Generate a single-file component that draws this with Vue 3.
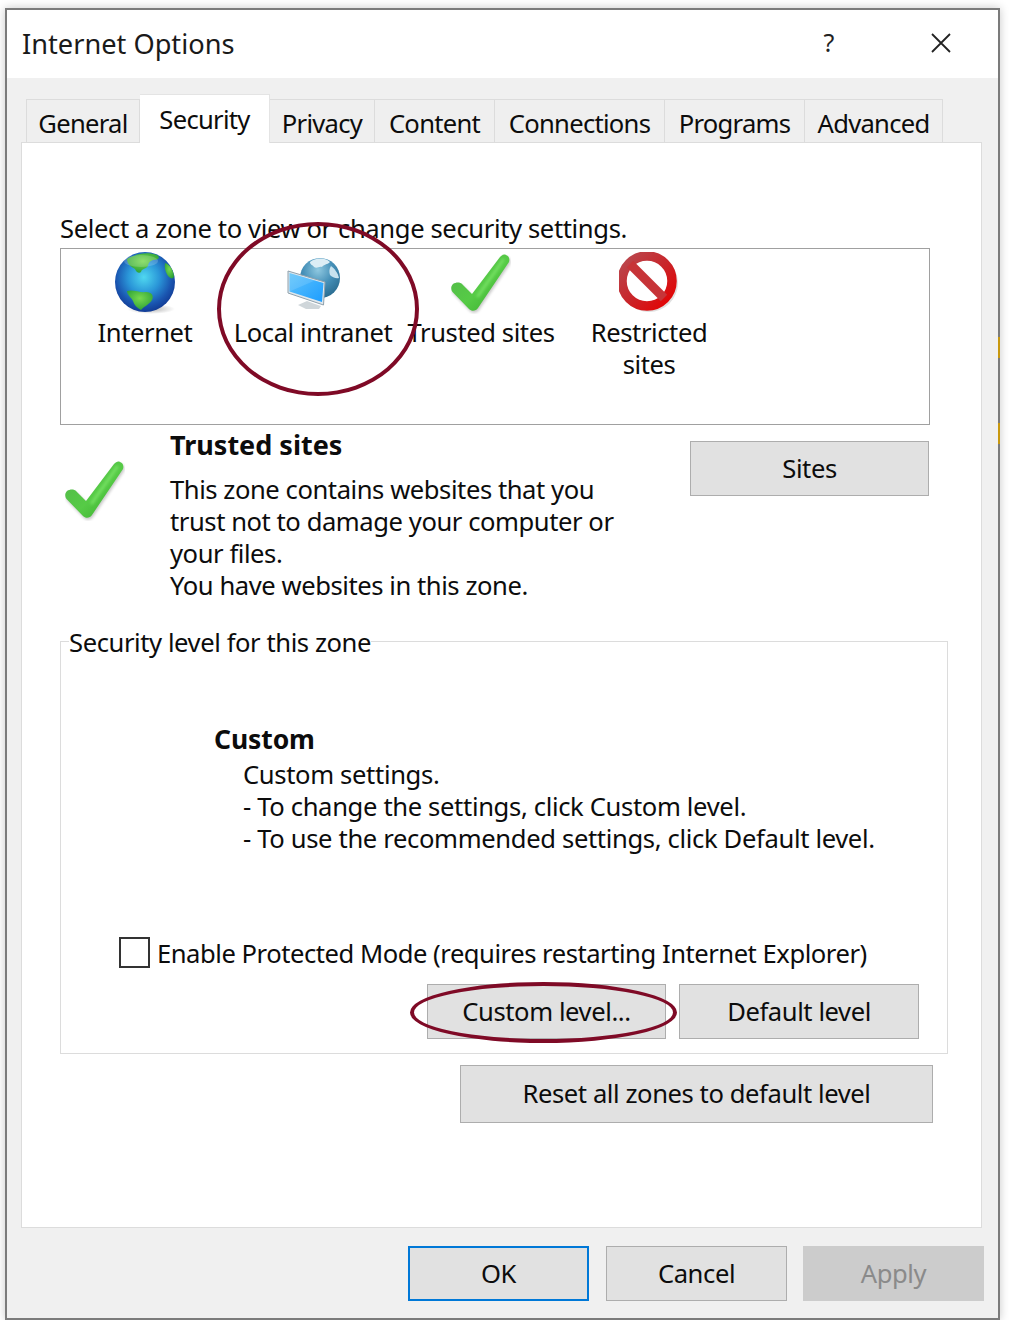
<script setup>
const tabs = [
  { name: 'General', width: 114 },
  { name: 'Security', width: 130, active: true },
  { name: 'Privacy', width: 105 },
  { name: 'Content', width: 120 },
  { name: 'Connections', width: 170 },
  { name: 'Programs', width: 140 },
  { name: 'Advanced', width: 138 },
]
const checkPath = 'M55 3C58 4 59 7 58 10L27 56C25 59 21 60 18 57L1.500 40C-.5 37 0 34 2 32C5 30 9 30 11 32L21 42L49 5C51 3 53 2 55 3Z'
</script>

<template>
  <div class="window">
    <header class="titlebar">
      <span class="title">Internet Options</span>
      <span class="help">?</span>
      <svg class="close" viewBox="0 0 20 20" width="20" height="20"><path d="M1 1L19 19M19 1L1 19" stroke="#222" stroke-width="1.8" fill="none" /></svg>
    </header>

    <div class="body">
      <nav class="tabs">
        <div
          v-for="tab in tabs"
          :key="tab.name"
          class="tab"
          :class="{ active: tab.active }"
          :style="{ width: tab.width + 'px' }"
        >{{ tab.name }}</div>
      </nav>

      <main class="panel">
        <p class="prompt">Select a zone to view or change security settings.</p>

        <div class="zones">
          <div class="zone">
            <svg class="zone-icon" viewBox="0 0 60 62" width="60" height="62">
              <defs>
                <radialGradient id="sea" cx="48%" cy="42%" r="58%">
                  <stop offset="0" stop-color="#4fd8f0" />
                  <stop offset=".45" stop-color="#2a96d8" />
                  <stop offset=".8" stop-color="#1a55b0" />
                  <stop offset="1" stop-color="#123c96" />
                </radialGradient>
                <radialGradient id="land" cx="50%" cy="40%" r="70%">
                  <stop offset="0" stop-color="#78d94e" />
                  <stop offset="1" stop-color="#239a33" />
                </radialGradient>
                <radialGradient id="floor" cx="50%" cy="50%" r="50%">
                  <stop offset="0" stop-color="#000" stop-opacity=".3" />
                  <stop offset="1" stop-color="#000" stop-opacity="0" />
                </radialGradient>
              </defs>
              <ellipse cx="36" cy="57" rx="24" ry="5" fill="url(#floor)" />
              <circle cx="30" cy="30" r="30" fill="url(#sea)" />
              <path d="M12 7C18 3 31-1 42 3C46 6 43 8 38 8C35 9 33 11 33 14C30 18 27 16 26 20C24 22 21 20 20 17C17 15 12 13 12 7Z" fill="url(#land)" />
              <path d="M50 11C54 12 58 17 59 24C59 27 56 27 54 25C51 22 49 16 50 11Z" fill="url(#land)" />
              <path d="M12 39C18 37 25 41 31 40C37 40 39 44 37 48C34 53 29 54 26 58C22 56 19 53 18 49C16 45 12 43 12 39Z" fill="url(#land)" />
              <ellipse cx="26" cy="9" rx="17" ry="6" fill="#fff" opacity=".18" />
            </svg>
            <span>Internet</span>
          </div>

          <div class="zone">
            <svg class="zone-icon" viewBox="0 0 60 62" width="60" height="62">
              <defs>
                <radialGradient id="ball" cx="45%" cy="30%" r="75%">
                  <stop offset="0" stop-color="#8fc8e0" />
                  <stop offset=".5" stop-color="#4690b8" />
                  <stop offset="1" stop-color="#27688c" />
                </radialGradient>
                <linearGradient id="screen" x1="0" y1="0" x2="1" y2="1">
                  <stop offset="0" stop-color="#5fc4fb" />
                  <stop offset="1" stop-color="#1d9dff" />
                </linearGradient>
              </defs>
              <g transform="translate(-3 0)">
                <circle cx="40" cy="26" r="20" fill="url(#ball)" />
                <path d="M30 10C35 6 44 5 50 10C47 13 44 12 42 15C39 14 37 17 34 15C33 13 30 13 30 10Z" fill="#dcedf5" />
                <path d="M51 14C54 16 58 21 59 26C56 27 52 25 50 23C49 20 49 17 51 14Z" fill="#c8e2ee" />
                <path d="M8 19L45 30L43.500 53L8 41Z" fill="#dfe7ec" stroke="#8fa1ad" stroke-width="1" />
                <path d="M9.500 21L43.500 31L42 50L9.500 39.500Z" fill="url(#screen)" />
                <path d="M9.500 21L35 28.500L9.500 39.500Z" fill="#fff" opacity=".12" />
                <path d="M27 49L35 52L41 54L39 57L26 57L18 53Z" fill="#cfd6da" />
              </g>
            </svg>
            <span>Local intranet</span>
          </div>

          <div class="zone">
            <svg class="zone-icon" viewBox="0 0 60 62" width="60" height="62">
              <defs>
                <linearGradient id="tick" x1="0" y1="0" x2="1" y2="1">
                  <stop offset="0" stop-color="#52b54a" />
                  <stop offset=".55" stop-color="#56cb46" />
                  <stop offset="1" stop-color="#35a829" />
                </linearGradient>
                <filter id="soft" x="-20%" y="-20%" width="140%" height="140%"><feGaussianBlur stdDeviation="1.500" /></filter>
              </defs>
              <path :d="checkPath" fill="#000" opacity=".22" filter="url(#soft)" transform="translate(1 2)" />
              <path :d="checkPath" fill="url(#tick)" />
              <path d="M52 8L27 44" stroke="#86ec72" stroke-width="3" opacity=".7" stroke-linecap="round" filter="url(#soft)" />
            </svg>
            <span>Trusted sites</span>
          </div>

          <div class="zone">
            <svg class="zone-icon" viewBox="0 0 60 62" width="60" height="62">
              <defs>
                <linearGradient id="red" x1="0" y1="0" x2="1" y2="1">
                  <stop offset="0" stop-color="#b94a50" />
                  <stop offset=".5" stop-color="#c8262b" />
                  <stop offset="1" stop-color="#e60000" />
                </linearGradient>
              </defs>
              <g transform="translate(-2 -1)">
                <ellipse cx="32" cy="32" rx="29" ry="29" fill="#000" opacity=".12" />
                <circle cx="30" cy="30" r="25" fill="#fff" stroke="url(#red)" stroke-width="9.500" />
                <path d="M13 13L47 47" stroke="#c73438" stroke-width="9" />
              </g>
            </svg>
            <span>Restricted<br />sites</span>
          </div>
        </div>

        <section class="details">
          <svg class="detail-icon" viewBox="0 0 60 62" width="60" height="62">
            <path :d="checkPath" fill="#000" opacity=".22" filter="url(#soft)" transform="translate(1 2)" />
            <path :d="checkPath" fill="url(#tick)" />
            <path d="M52 8L27 44" stroke="#86ec72" stroke-width="3" opacity=".7" stroke-linecap="round" filter="url(#soft)" />
          </svg>
          <div class="detail-text">
            <h2>Trusted sites</h2>
            <p>This zone contains websites that you<br />trust not to damage your computer or<br />your files.<br />You have websites in this zone.</p>
          </div>
          <button class="btn sites">Sites</button>
        </section>

        <fieldset class="level">
          <legend><span class="legend-text">Security level for this zone</span></legend>
          <h2 class="custom">Custom</h2>
          <p class="custom-text">Custom settings.<br />- To change the settings, click Custom level.<br />- To use the recommended settings, click Default level.</p>
          <label class="protected">
            <span class="checkbox"></span>
            <span class="protected-text">Enable Protected Mode (requires restarting Internet Explorer)</span>
          </label>
          <div class="level-buttons">
            <button class="btn level-btn">Custom level...</button>
            <button class="btn level-btn">Default level</button>
          </div>
        </fieldset>

        <button class="btn reset">Reset all zones to default level</button>
      </main>

      <footer class="footer">
        <button class="btn foot ok">OK</button>
        <button class="btn foot">Cancel</button>
        <button class="btn foot apply">Apply</button>
      </footer>
    </div>

    <div class="oval oval-zone"></div>
    <div class="oval oval-custom"></div>
    <i class="edge edge-one"></i>
    <i class="edge edge-two"></i>
  </div>
</template>

<style>
html, body { background: #fff; }
</style>

<style scoped>
.window {
  position: relative;
  box-sizing: border-box;
  width: 995px;
  height: 1312px;
  margin: 8px 0 0 5px;
  border: 2px solid #7b7b7b;
  box-shadow: 0 0 9px rgba(0, 0, 0, .22);
  background: #f0f0f0;
  display: flex;
  flex-direction: column;
  font-family: "Noto Sans", "Open Sans", sans-serif;
  font-size: 25.6px;
  letter-spacing: -.42px;
  line-height: 32px;
  color: #0c0c0c;
}
.titlebar {
  height: 68px;
  flex: none;
  background: #fff;
  display: flex;
  align-items: center;
  padding: 0 47px 0 15px;
  box-sizing: border-box;
}
.title { flex: 1; font-size: 27.2px; letter-spacing: 0; color: #1a1a1a; }
.help { font-size: 25px; margin-right: 97px; padding-bottom: 4px; color: #222; }
.close { margin-bottom: 2px; }
.body { flex: 1; display: flex; flex-direction: column; padding-left: 14px; }
.tabs { display: flex; align-items: flex-end; height: 64px; margin-left: 5px; position: relative; z-index: 1; letter-spacing: -.72px; }
.tab {
  box-sizing: border-box;
  height: 43px;
  border: 1px solid #dcdcdc;
  border-left-width: 0;
  border-bottom: 0;
  text-align: center;
  padding-top: 8px;
  background: #efefef;
}
.tab:first-child { border-left-width: 1px; }
.tab.active {
  height: 49px;
  padding-top: 9px;
  background: #fff;
  margin-bottom: -1px;
  border-color: #e4e4e4;
}
.panel {
  box-sizing: border-box;
  width: 961px;
  height: 1086px;
  background: #fff;
  border: 1px solid #dcdcdc;
  padding: 70px 0 0 38px;
}
.prompt { margin: 0; letter-spacing: -.38px; }
.zones {
  box-sizing: border-box;
  width: 870px;
  height: 177px;
  margin-top: 3px;
  border: 1px solid #a0a0a0;
  display: flex;
  align-items: flex-start;
  padding-top: 3px;
}
.zone { width: 168px; flex: none; display: flex; flex-direction: column; align-items: center; text-align: center; white-space: nowrap; }
.zone-icon { flex: none; height: 62px; margin-bottom: 3px; }
.details { display: flex; align-items: flex-start; margin-top: 4px; }
.detail-icon { margin: 30px 45px 0 5px; flex: none; }
.detail-text { width: 520px; flex: none; }
h2 { margin: 0; font-size: 27px; font-weight: 700; letter-spacing: 0; }
.detail-text p { margin: 13px 0 0; white-space: nowrap; letter-spacing: -.44px; }
.btn {
  display: block;
  box-sizing: border-box;
  font: inherit;
  letter-spacing: inherit;
  color: inherit;
  background: #e1e1e1;
  border: 1px solid #adadad;
  padding: 0;
  white-space: nowrap;
}
.sites { width: 239px; height: 55px; margin-top: 12px; }
.level {
  box-sizing: border-box;
  width: 888px;
  margin: 25px 0 0;
  padding: 68px 0 14px;
  border: 1px solid #dcdcdc;
  min-inline-size: 0;
}
legend { margin-left: 8px; padding: 0; line-height: 28px; }
.legend-text { position: relative; top: 2px; }
.custom { margin-left: 153px; font-size: 26.5px; letter-spacing: -.1px; }
.custom-text { margin: 4px 0 0 182px; white-space: nowrap; letter-spacing: -.35px; }
.protected { display: flex; align-items: center; gap: 7px; margin: 83px 0 0 58px; height: 32px; white-space: nowrap; }
.protected-text { letter-spacing: -.47px; }
.checkbox { flex: none; box-sizing: border-box; width: 31px; height: 31px; margin-bottom: 4px; border: 2px solid #333; background: #fff; }
.level-buttons { display: flex; justify-content: flex-end; gap: 13px; margin-top: 14px; padding-right: 28px; }
.level-btn { width: 239px; height: 55px; }
.level-btn:last-child { width: 240px; }
.reset { width: 473px; height: 58px; margin: 11px 0 0 400px; }
.footer { display: flex; gap: 17px; margin: 18px 0 0 387px; }
.foot { width: 181px; height: 55px; }
.ok { border: 2px solid #0078d7; }
.apply { margin-left: -1px; background: #cccccc; border-color: #cccccc; color: #8a8a8a; }
.oval { position: absolute; box-sizing: border-box; border: 4.500px solid #7f0a26; border-radius: 50%; pointer-events: none; z-index: 2; }
.oval-zone { left: 210px; top: 212px; width: 202px; height: 174px; }
.oval-custom { left: 403px; top: 972px; width: 267px; height: 61px; }
.edge { position: absolute; right: -2px; width: 2px; height: 21px; background: #c8980f; }
.edge-one { top: 327px; }
.edge-two { top: 413px; }
</style>
